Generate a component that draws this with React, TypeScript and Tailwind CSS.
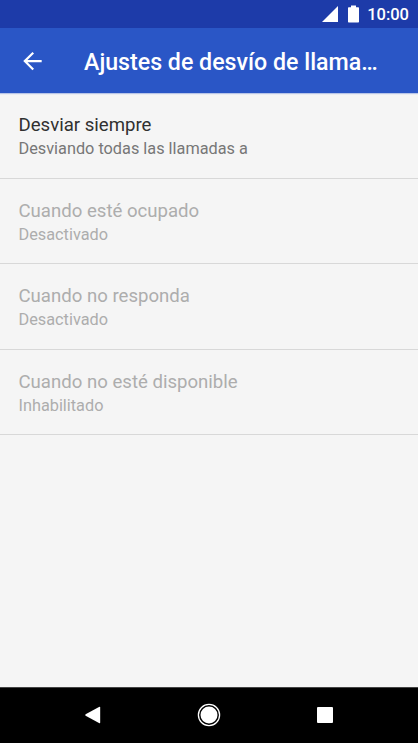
import { useState } from "react";

interface ForwardingOption {
  id: string;
  title: string;
  summary: string;
  disabled?: boolean;
}

const options: ForwardingOption[] = [
  {
    id: "always",
    title: "Desviar siempre",
    summary: "Desviando todas las llamadas a",
  },
  {
    id: "busy",
    title: "Cuando esté ocupado",
    summary: "Desactivado",
    disabled: true,
  },
  {
    id: "unanswered",
    title: "Cuando no responda",
    summary: "Desactivado",
    disabled: true,
  },
  {
    id: "unreachable",
    title: "Cuando no esté disponible",
    summary: "Inhabilitado",
    disabled: true,
  },
];

function StatusBar() {
  return (
    <div className="flex h-7 shrink-0 items-center justify-end bg-[#1d3ba9] pr-[9px] text-white">
      <svg width="16" height="16" viewBox="0 0 16 16" fill="currentColor">
        <path d="M16 0v16H0z" />
      </svg>
      <svg
        width="11"
        height="18"
        viewBox="0 0 11 18"
        fill="currentColor"
        className="ml-[10px]"
      >
        <path d="M3 .4h5v1.8h2.4l.6.6V17l-.6.6H.6L0 17V2.8l.6-.6H3z" />
      </svg>
      <span className="ml-2 pt-0.5 text-[16.5px] leading-none font-medium">
        10:00
      </span>
    </div>
  );
}

function AppBar() {
  return (
    <header className="z-10 flex h-[65px] shrink-0 items-center bg-[#2a56c6] text-white shadow-[0_1px_1px_rgba(42,86,198,0.3)]">
      <button className="ml-[18px] flex size-7 items-center justify-center">
        <svg width="28" height="28" viewBox="0 0 24 24" fill="currentColor">
          <path d="M20.3 11.1H8.13l5.59-5.59L12.4 4.2 4.5 12.1l7.9 7.9 1.32-1.31L8.13 13.1H20.3z" />
        </svg>
      </button>
      <h1 className="ml-[38px] pt-[3px] text-[23.2px] font-medium whitespace-nowrap">
        Ajustes de desvío de llama…
      </h1>
    </header>
  );
}

function NavBar() {
  return (
    <nav className="flex h-14 shrink-0 items-center justify-center gap-[92px] border-t border-[#444] bg-black pb-px text-white">
      <svg width="24" height="24" viewBox="0 0 24 24" fill="currentColor">
        <path d="M4.6 11.3L18 3.9q1.2-.5 1.2.5v15.2q0 1-1.2.5L4.6 12.7q-.8-.7 0-1.4z" />
      </svg>
      <svg width="24" height="24" viewBox="0 0 24 24">
        <circle cx="12" cy="12" r="10.6" fill="none" stroke="white" strokeWidth="1.3" />
        <circle cx="12" cy="12" r="8.5" fill="white" />
      </svg>
      <svg width="24" height="24" viewBox="0 0 24 24" fill="currentColor">
        <rect x="4" y="4" width="16" height="16" rx="1" />
      </svg>
    </nav>
  );
}

export default function App() {
  const [selected, setSelected] = useState<string>("");

  return (
    <div className="flex h-screen flex-col bg-[#f5f5f5] font-[Roboto,sans-serif]">
      <StatusBar />
      <AppBar />
      <ul className="flex-1">
        {options.map((option) => (
          <li key={option.id} className="border-b border-[#d8d8d8]">
            <button
              disabled={option.disabled}
              aria-pressed={selected === option.id}
              onClick={() => setSelected(option.id)}
              className="block h-[84.5px] w-full px-[18.5px] pt-[3.8px] text-left text-[#303030] disabled:text-[#adadad]"
            >
              <span className="block text-[18.6px] leading-6">{option.title}</span>
              <span
                className={
                  option.disabled
                    ? "block text-[16.3px] leading-6"
                    : "block text-[16.3px] leading-6 text-[#777]"
                }
              >
                {option.summary}
              </span>
            </button>
          </li>
        ))}
      </ul>
      <NavBar />
    </div>
  );
}
